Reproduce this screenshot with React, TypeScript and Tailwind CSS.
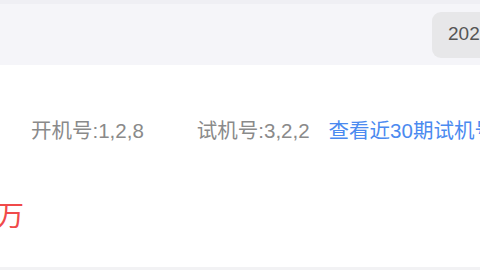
export default function App() {
  return (
    <div
      className="w-[480px] h-[270px] overflow-hidden bg-white flex flex-col"
      style={{ fontFamily: '"Liberation Sans", "Noto Sans CJK SC", sans-serif' }}
    >
      <div className="h-[4px] shrink-0 bg-[#efeff4]" />
      <div className="h-[61px] shrink-0 bg-[#f5f5f9] flex items-center pl-[432px]">
        <div className="shrink-0 h-[46px] w-[120px] rounded-[9px] bg-[#e7e7e9] flex items-center pl-[16px] text-[19px] text-[#555] whitespace-nowrap">
          2026074期
        </div>
      </div>
      <div className="h-[202px] shrink-0 bg-white flex flex-col">
        <div className="h-[68px] mt-[32px] flex items-center text-[20.5px] whitespace-nowrap">
          <span className="ml-[31px] text-[#8a8a8a]">开机号:1,2,8</span>
          <span className="ml-[53px] text-[#8a8a8a]">试机号:3,2,2</span>
          <span className="ml-[19px] text-[#4b8af0]">查看近30期试机号</span>
        </div>
        <div className="h-[40px] mt-[32px] flex items-center -ml-[4px] text-[28px] text-[#f04a4a] whitespace-nowrap">
          万
        </div>
      </div>
      <div className="flex-1 bg-[#f2f2f4]" />
    </div>
  );
}
